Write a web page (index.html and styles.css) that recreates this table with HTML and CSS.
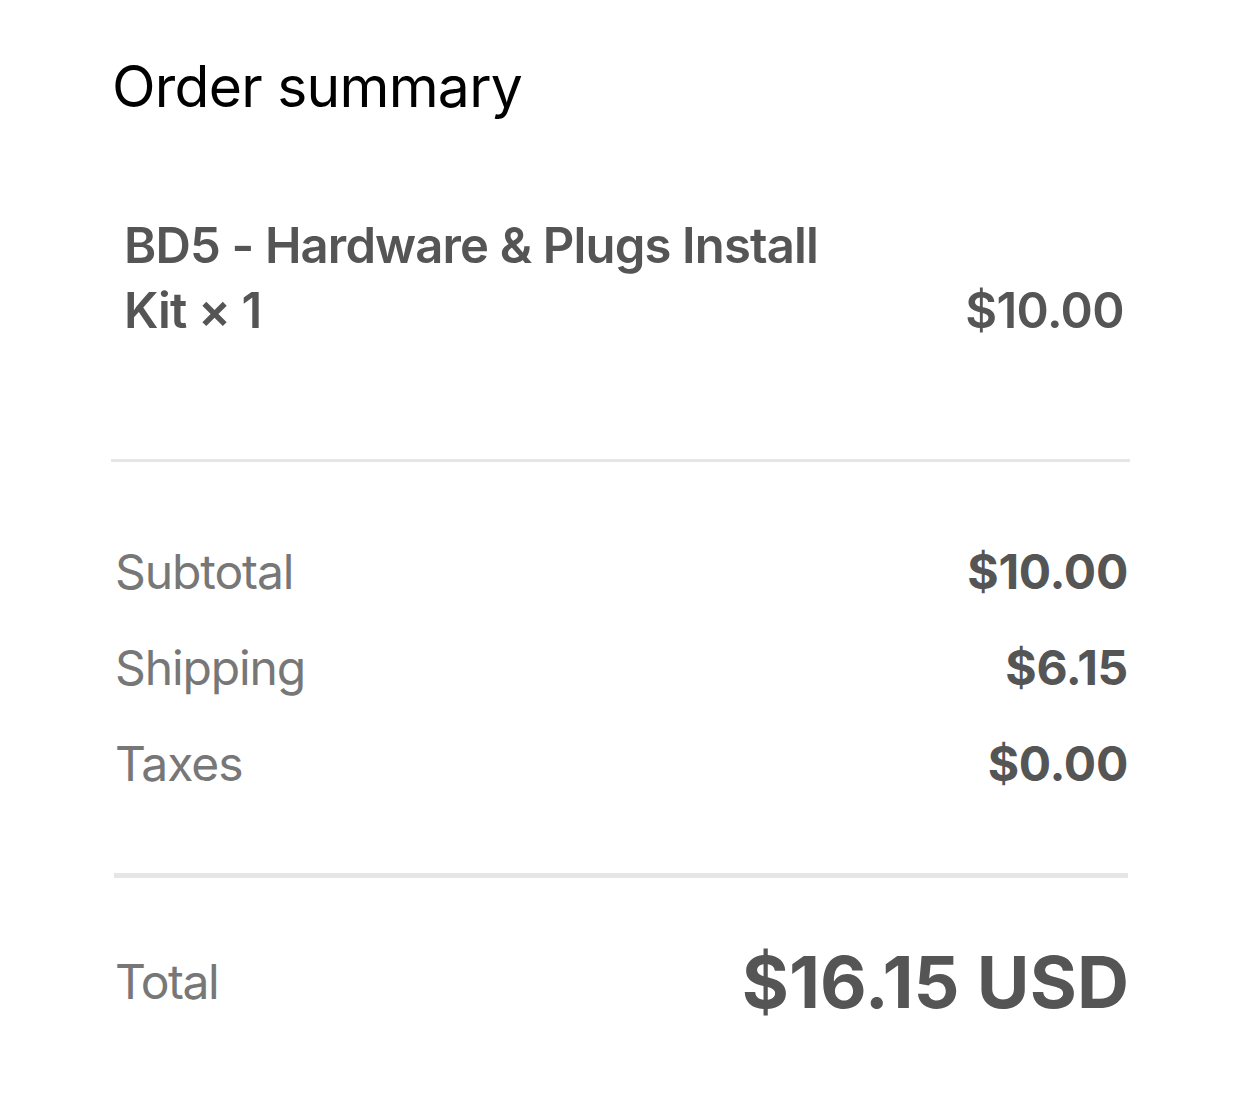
FILE: index.html
```html
<!DOCTYPE html>
<html lang="en">
<head>
<meta charset="utf-8">
<title>Order summary</title>
<link rel="stylesheet" href="styles.css">
</head>
<body>
<main class="summary">
  <h1 class="title">Order summary</h1>
  <section class="item">
    <div class="item-name">BD5 - Hardware &amp; Plugs Install<br>Kit × 1</div>
    <div class="item-price">$10.00</div>
  </section>
  <hr class="divider divider-thin">
  <section class="costs">
    <div class="row"><span class="label">Subtotal</span><span class="value">$10.00</span></div>
    <div class="row"><span class="label">Shipping</span><span class="value">$6.15</span></div>
    <div class="row"><span class="label">Taxes</span><span class="value">$0.00</span></div>
  </section>
  <hr class="divider divider-thick">
  <section class="total">
    <span class="label total-label">Total</span>
    <span class="total-amount">$16.15 USD</span>
  </section>
</main>
</body>
</html>
```

FILE: styles.css
```css
* { box-sizing: border-box; }
html, body {
  margin: 0;
  padding: 0;
  background: #fff;
}
body {
  font-family: Inter, "Liberation Sans", Arial, sans-serif;
  width: 1242px;
  height: 1114px;
  overflow: hidden;
}
.summary {
  padding: 53px 112px 0 111px;
  display: flex;
  flex-direction: column;
}
.title {
  margin: 0 0 0 1px;
  font-size: 57px;
  line-height: 68px;
  font-weight: 400;
  color: #000;
  letter-spacing: -0.75px;
}
.item {
  margin-top: 92px;
  display: flex;
  justify-content: space-between;
  align-items: flex-end;
  padding: 0 6px 0 13px;
}
.item-name {
  font-size: 49px;
  line-height: 65px;
  font-weight: 600;
  color: #555;
  letter-spacing: -0.85px;
}
.item-price {
  font-size: 49px;
  line-height: 65px;
  font-weight: 600;
  color: #555;
  letter-spacing: -0.6px;
}
.divider {
  border: 0;
  margin: 0;
  background: #e6e6e6;
}
.divider-thin {
  height: 3px;
  margin-top: 116px;
}
.costs {
  margin-top: 62px;
  display: flex;
  flex-direction: column;
  padding: 0 2px 0 4px;
}
.row {
  display: flex;
  justify-content: space-between;
  align-items: baseline;
  height: 96px;
  line-height: 96px;
}
.label {
  font-size: 48px;
  font-weight: 400;
  color: #777;
  letter-spacing: -1.1px;
}
.value {
  font-size: 48px;
  font-weight: 700;
  color: #555;
  letter-spacing: -0.3px;
}
.divider-thick {
  height: 5px;
  margin: 61px 2px 0 3px;
}
.total {
  margin-top: 58px;
  display: flex;
  justify-content: space-between;
  align-items: center;
  padding: 0 1px 0 4px;
  height: 90px;
}
.total-label {
  letter-spacing: -1.5px;
}
.total-amount {
  font-size: 72px;
  font-weight: 700;
  color: #555;
  letter-spacing: 0.1px;
}
```
